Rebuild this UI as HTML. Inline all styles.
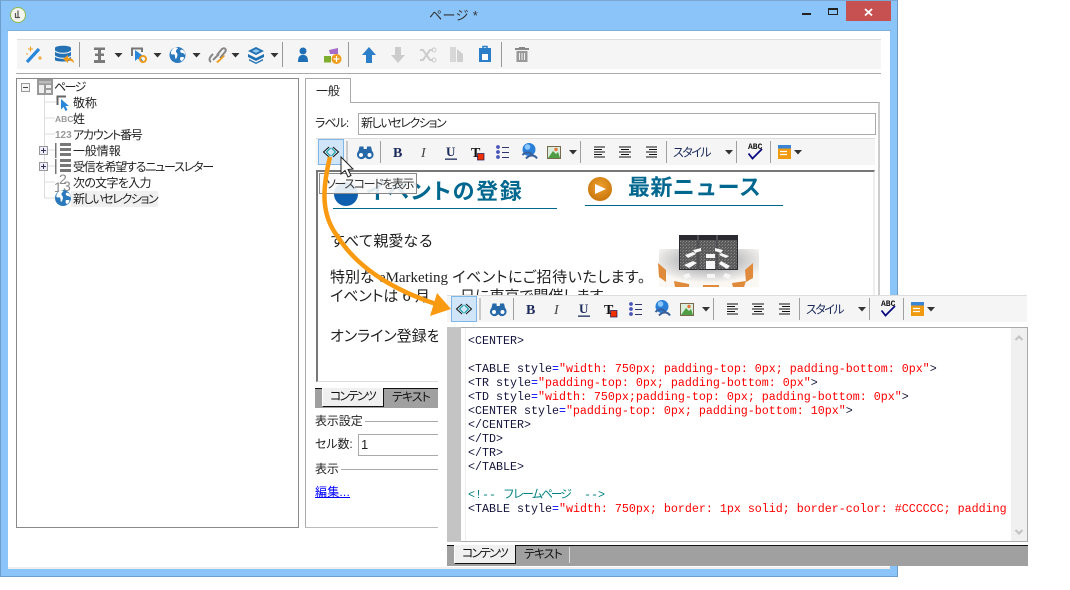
<!DOCTYPE html>
<html lang="ja"><head><meta charset="utf-8"><title>ページ *</title>
<style>
html,body{margin:0;padding:0;background:#fff}
body{width:1070px;height:590px;position:relative;overflow:hidden;font-family:"Liberation Sans","Noto Sans CJK JP",sans-serif;font-size:12px;color:#222}
div,a,svg{position:absolute;box-sizing:border-box}
.t{white-space:nowrap;line-height:16px;height:16px;font-feature-settings:"palt";letter-spacing:-.1px}
.b{font-size:15px;line-height:20px;height:20px;color:#222}
.code{font-family:"Liberation Mono",monospace;font-size:11.67px;line-height:14px;height:14px;white-space:pre;left:468px;color:#14143c}
.code i{font-style:normal;color:#00f}.code b{font-weight:normal;color:#f00}
svg{overflow:visible}
</style></head><body>
<!-- window frame -->
<div style="left:0;top:0;width:898px;height:577px;background:#8bc4f8;border:1px solid #6d9ecb;border-top-color:#7aa7d2"></div>
<div style="left:8px;top:31px;width:882px;height:538px;background:#fff;border-bottom:2px solid #eee"></div>
<div style="left:7px;top:30px;width:884px;height:1px;background:#7fb0dd"></div>
<div class="t" style="left:429px;top:8px;font-size:13px;color:#333;letter-spacing:.4px">ページ *</div>
<div style="left:846px;top:1px;width:45px;height:20px;background:#c75050"></div>
<svg style="left:0;top:0" width="1070" height="590">
<defs>
<g id="globe"><circle r="8" fill="#2b79bd"/><path d="M-3-7.5C-6-5-7-3-6.5-1-5 0-4-1-3-.5-2 1-3 3-1.5 4-.5 2 .5 0-.5-2-2-3-2-5 0-6 1-7-1-8-3-7.5ZM3-5C2-3 4-2 5-2 6-2 7-1 7.5 0 8-3 6-6 3-5ZM3 2C2 4 3 6 4 6 6 5 7 3 6 2Z" fill="#fff"/></g>
<g id="arr"><path d="M-4-2H4L0 2.5Z" fill="#333"/></g>
<g id="tb">
<g fill="#a0a0a0">
<rect x="346.500" y="141" width="1" height="22"/><rect x="380" y="141" width="1" height="22"/><rect x="580" y="141" width="1" height="22"/><rect x="666" y="141" width="1" height="22"/><rect x="736" y="141" width="1" height="22"/><rect x="770" y="141" width="1" height="22"/>
</g>
<rect x="318.500" y="139.500" width="25" height="25" fill="#d0e5f8" stroke="#7fb6e8"/>
<path d="M329 147 323.500 152 329 157M333 147 338.500 152 333 157" fill="none" stroke="#111" stroke-width="1"/>
<path d="M330.500 148 326.500 152 330.500 156M331.500 148 335.500 152 331.500 156" fill="none" stroke="#0a9a9a" stroke-width="1"/>
<!-- binoculars -->
<g fill="#2668a8"><circle cx="361.500" cy="154.500" r="4.600"/><circle cx="369" cy="154.500" r="4.600"/><path d="M358 153 359.500 146.500H363.500L364 153ZM366.500 153 367 146.500H371L372.500 153Z"/><rect x="362" y="149" width="6" height="4"/></g>
<circle cx="361" cy="155" r="2" fill="#fff"/><circle cx="369.500" cy="155" r="2" fill="#fff"/>
<rect x="445" y="158.500" width="12" height="1.300" fill="#1b2a5a"/>
<!-- T color -->
<rect x="477.500" y="153.500" width="6.500" height="6.500" fill="#f03000" stroke="#14145a" stroke-width=".7"/>
<!-- list -->
<g fill="#4a55b8"><circle cx="498" cy="147" r="1.900"/><circle cx="498" cy="152" r="1.900"/><circle cx="498" cy="157" r="1.900"/></g>
<path d="M502 147.500H509M502 152.500H509M502 157.500H509" stroke="#30356e" stroke-width="1"/>
<!-- globe link -->
<circle cx="529" cy="149.500" r="6.500" fill="#2a7fd8"/><circle cx="527.500" cy="147" r="2.800" fill="#8cc8ff"/>
<path d="M522.500 155C526 151 531 152 533 156M526 158.500C530 154 535 155 537 158.500" fill="none" stroke="#3a5f98" stroke-width="2"/>
<!-- image -->
<rect x="547.500" y="146.500" width="13" height="12" fill="#dbeedd" stroke="#7a6a50"/>
<path d="M548 158 553 151 556 154 558 152 560 158Z" fill="#4f9e45"/><circle cx="556" cy="149.500" r="1.700" fill="#e8743a"/>
<use href="#arr" x="573" y="152"/>
<!-- align -->
<path d="M594 147H605M594 149.500H602M594 152H605M594 154.500H602M594 157H605" stroke="#111"/>
<path d="M619 147H631M621 149.500H629M619 152H631M621 154.500H629M619 157H631" stroke="#111"/>
<path d="M646 147H657M649 149.500H657M646 152H657M649 154.500H657M646 157H657" stroke="#111"/>
<use href="#arr" x="729" y="152"/>
<!-- abc check -->
<path d="M748.500 153.500 752.500 158.500 762 149" fill="none" stroke="#0a0a80" stroke-width="1.800"/>
<!-- window -->
<rect x="778" y="145" width="13" height="14" fill="#f09a10"/><rect x="778" y="145" width="13" height="3.500" fill="#3a85d5"/><path d="M780 151.500H787M780 154.500H787" stroke="#fff" stroke-width="1.200"/>
<use href="#arr" x="798" y="152"/>
</g>
</defs>
<!-- window icon -->
<circle cx="18" cy="15" r="7.500" fill="#f4f4ee" stroke="#8fb84a"/><path d="M18 10.500V17M15.500 13V17.500H20" fill="none" stroke="#555" stroke-width="1.200"/>
<!-- window buttons -->
<rect x="802" y="13" width="9" height="2" fill="#222"/>
<rect x="828.500" y="8.500" width="9" height="6" fill="none" stroke="#222"/><rect x="828" y="8" width="10" height="2" fill="#222"/>
<path d="M865 9 872 15.500M872 9 865 15.500" stroke="#fff" stroke-width="1.800"/>
</svg>

<!-- main toolbar -->
<div style="left:17px;top:39px;width:864px;height:30px;background:#f5f5f5;border-top:1px solid #ddd"></div>
<div style="left:16px;top:73px;width:865px;height:1px;background:#aaa"></div>
<svg style="left:0;top:0" width="1070" height="590">
<!-- wand -->
<path d="M27 62 39 49" stroke="#2a86d8" stroke-width="3.200"/>
<path d="M28 49h5M30.500 46.500v5M38 58h4M40 56v4M26 54h2" stroke="#f0a020" stroke-width="1.100"/>
<!-- db -->
<path d="M55 48C55 45 71 45 71 48V60C71 62 55 62 55 60Z" fill="#2472b4"/>
<path d="M55 51C58 54 68 54 71 51M55 56C58 59 68 59 71 56" fill="none" stroke="#fff"/>
<path d="M63 59 68 55V58C72 58 74 60 74 63 72 61 70 60.500 68 60.500V63Z" fill="#ef9b1c"/>
<!-- separators -->
<g fill="#999"><rect x="79" y="42" width="1" height="25"/><rect x="282" y="42" width="1" height="25"/><rect x="348" y="42" width="1" height="25"/><rect x="501" y="42" width="1" height="25"/></g>
<!-- ibeam -->
<path d="M94 47.500H105V50H101V53.500H104V56H101V60H105V63H94V60H98V56H95V53.500H98V50H94Z" fill="#7a7a7a"/>
<use href="#arr" x="118.500" y="55"/>
<!-- cursor gear -->
<path d="M132 56V48.500H142V52" fill="none" stroke="#777" stroke-width="2"/>
<path d="M135 50V61L138 58.500 141 62 143 61 140.500 57.500 144 56.500Z" fill="#2a86d8"/>
<circle cx="143" cy="59" r="3" fill="none" stroke="#ef9b1c" stroke-width="2"/>
<use href="#arr" x="157.500" y="55"/>
<use href="#globe" x="177.500" y="55"/>
<use href="#arr" x="196.500" y="55"/>
<!-- link -->
<path d="M211 62C208 60 210 57 213 54M217 55 222 49C225 47 227 50 225 52L220 58M213 60 219 54" fill="none" stroke="#888" stroke-width="2"/>
<path d="M216 62 224 55 225 56 218 63Z" fill="#ef9b1c"/>
<use href="#arr" x="235.500" y="55"/>
<!-- layers -->
<path d="M256 47 264 51 256 55 248 51Z" fill="#1f70b0"/><path d="M248 54 256 58 264 54V57L256 61 248 57Z" fill="#1f70b0"/><path d="M249 59 256 62.500 263 59V60.500L256 64 249 60.500Z" fill="#1f70b0"/>
<path d="M252 51 256 49 260 51 256 53Z" fill="#8dc6ee"/>
<use href="#arr" x="274.500" y="55"/>
<!-- person -->
<circle cx="303" cy="51" r="3.500" fill="#1e6fb5"/><path d="M298 62C298 56 300 55 303 55 306 55 308 56 308 62Z" fill="#1e6fb5"/>
<!-- shapes -->
<path d="M329 50 338 48V54H330Z" fill="#a66cc8"/><rect x="324" y="56" width="7" height="6.500" fill="#7fae2e"/><circle cx="336.500" cy="59" r="5" fill="#ef9b1c"/><path d="M333.500 59H339.500M336.500 56V62" stroke="#fff" stroke-width="1.200"/>
<!-- arrows -->
<path d="M369 47 376 55H372V63H366V55H362Z" fill="#2a7fc8"/>
<path d="M398 63 405 55H401V47H395V55H391Z" fill="#ccc"/>
<path d="M420 50H423L430 60H433M420 60H423L430 50H433" fill="none" stroke="#ccc" stroke-width="2"/><circle cx="434" cy="50" r="2" fill="none" stroke="#ccc"/><circle cx="434" cy="60" r="2" fill="none" stroke="#ccc"/>
<path d="M450 47H456V62H450Z" fill="#d8d8d8"/><path d="M457 49 463 54V62H457Z" fill="#cfcfcf"/>
<path d="M479 48H491V62H479Z" fill="#2a7fc8"/><rect x="483" y="46.500" width="4" height="4" fill="none" stroke="#2a7fc8" stroke-width="1.500"/><path d="M482 54H488V60H482Z" fill="#fff"/>
<path d="M515 49H529" stroke="#888" stroke-width="2"/><rect x="519" y="47" width="6" height="2" fill="#888"/><path d="M516.500 51H527.500V62H516.500Z" fill="#999"/><path d="M519.500 53V60M522 53V60M524.500 53V60" stroke="#eee"/>
</svg>

<!-- tree -->
<div style="left:16px;top:78px;width:283px;height:450px;background:#fff;border:1px solid #8a8a8a"></div>
<svg style="left:0;top:0" width="1070" height="590">
<path d="M44.500 95V198M44.500 102H56M44.500 118H55M44.500 134H55M48 150H55M48 166H55M44.500 182H55M44.500 198H55" stroke="#dcdcdc" fill="none"/>
<rect x="21.500" y="83.500" width="8" height="8" fill="#f4f4f4" stroke="#999"/><path d="M23 87.500H28" stroke="#444"/>
<rect x="39.500" y="146.500" width="8" height="8" fill="#eef" stroke="#999"/><path d="M41 150.500H46M43.500 148V153" stroke="#335"/>
<rect x="39.500" y="162.500" width="8" height="8" fill="#eef" stroke="#999"/><path d="M41 166.500H46M43.500 164V169" stroke="#335"/>
<!-- page icon -->
<rect x="37" y="79" width="16" height="16" fill="#999"/><rect x="39" y="85" width="5" height="8" fill="#eee"/><rect x="46" y="85" width="5" height="3" fill="#eee"/><rect x="46" y="90" width="5" height="3" fill="#eee"/><rect x="39" y="81" width="12" height="2.500" fill="#bbb"/>
<!-- cursor -->
<path d="M57.500 105V96.500H66" fill="none" stroke="#666" stroke-width="2"/>
<path d="M61 99V109.500L63.500 107 65.500 111 67.500 110 65.500 106H69Z" fill="#2a86d8"/>
<text x="55" y="122" font-family="Liberation Sans" font-size="8.500" font-weight="bold" fill="#999">ABC</text>
<text x="55" y="138" font-family="Liberation Sans" font-size="10" font-weight="bold" fill="#999">123</text>
<g fill="#777"><rect x="55" y="143" width="1.500" height="15"/><rect x="55" y="159" width="1.500" height="15"/>
<rect x="60" y="143" width="11" height="3"/><rect x="60" y="148" width="11" height="3"/><rect x="60" y="153" width="11" height="3"/>
<rect x="60" y="159" width="11" height="3"/><rect x="60" y="164" width="11" height="3"/><rect x="60" y="169" width="11" height="3"/></g>
<g font-family="Liberation Sans" font-size="14" fill="#8a8a8a"><text x="59" y="184">2</text><text x="54" y="192">1</text><text x="63" y="191">3</text></g>
<use href="#globe" x="63" y="198"/>
</svg>
<div style="left:71px;top:191px;width:87px;height:16px;background:#f0f0f0"></div>
<div class="t" style="left:54px;top:79px;letter-spacing:-1.600px">ページ</div>
<div class="t" style="left:73px;top:95px">敬称</div>
<div class="t" style="left:73px;top:111px">姓</div>
<div class="t" style="left:73px;top:127px;letter-spacing:-1.200px">アカウント番号</div>
<div class="t" style="left:73px;top:143px">一般情報</div>
<div class="t" style="left:73px;top:159px;letter-spacing:-1.200px">受信を希望するニュースレター</div>
<div class="t" style="left:73px;top:175px;letter-spacing:-.7px">次の文字を入力</div>
<div class="t" style="left:73px;top:191px;letter-spacing:-1.400px">新しいセレクション</div>

<!-- right panel -->
<div style="left:305px;top:102px;width:575px;height:426px;border:1px solid #aaa;border-right:2px solid #ccc;border-bottom-color:#bbb"></div>
<div style="left:305px;top:78px;width:46px;height:25px;background:#fff;border:1px solid #aaa;border-bottom:0"></div>
<div class="t" style="left:316px;top:83px">一般</div>
<div class="t" style="left:315px;top:115px;letter-spacing:-1px">ラベル:</div>
<div style="left:358px;top:113px;width:518px;height:22px;border:1px solid #aaa"></div>
<div class="t" style="left:361px;top:115px;letter-spacing:-1.400px">新しいセレクション</div>
<div style="left:316px;top:138px;width:559px;height:27px;background:#f5f5f5;border-top:1px solid #ddd"></div>
<!-- editor -->
<div style="left:316px;top:170px;width:559px;height:212px;border:2px solid #777;border-right:1px solid #eee;border-bottom:1px solid #ddd;background:#fff"></div>
<div style="left:873px;top:172px;width:1px;height:130px;background:#eee"></div>
<div class="t" style="left:366px;top:177px;height:30px;line-height:30px;font-size:22px;font-weight:bold;color:#00678f;letter-spacing:1.700px">イベントの登録</div>
<div style="left:333px;top:208px;width:224px;height:1px;background:#00678f"></div>
<div style="left:334px;top:182px;width:24px;height:24px;border-radius:12px;background:#0d5fae"></div>
<div style="left:588px;top:177px;width:24px;height:24px;border-radius:12px;background:radial-gradient(circle at 50% 40%,#f0a030,#bd6a00)"></div>
<svg style="left:0;top:0" width="1070" height="590"><path d="M595 184 606 189 595 194Z" fill="#fff"/></svg>
<div class="t" style="left:628px;top:173px;height:30px;line-height:30px;font-size:22px;font-weight:bold;color:#00678f;letter-spacing:.4px;font-feature-settings:normal">最新ニュース</div>
<div style="left:585px;top:205px;width:198px;height:1px;background:#00678f"></div>
<div class="t b" style="left:330px;top:230px;letter-spacing:0;font-feature-settings:normal;top:232px">すべて親愛なる</div>
<div class="t b" style="left:330px;top:268px;letter-spacing:0">特別な <span style="font-family:'Liberation Serif',serif">eMarketing</span> <span style="letter-spacing:.6px">イベントにご招待いたします。</span></div>
<div class="t b" style="left:330px;top:287px;letter-spacing:0">イベントは 6 月　　日に東京で開催します</div>
<div class="t b" style="left:330px;top:327px;letter-spacing:0">オンライン登録をお願いします</div>
<!-- server image -->
<svg style="left:653px;top:235px" width="110" height="52" viewBox="0 0 110 52">
<defs><radialGradient id="fl" cx=".5" cy=".3" r=".6"><stop offset="0" stop-color="#8a8a8a"/><stop offset=".6" stop-color="#cfcfcf"/><stop offset="1" stop-color="#fbf8f4"/></radialGradient>
<pattern id="nz" width="3" height="3" patternUnits="userSpaceOnUse"><rect width="3" height="3" fill="#5a5a5a"/><rect width="1" height="1" fill="#8a8a8a"/><rect x="2" y="1" width="1" height="1" fill="#777"/></pattern></defs>
<rect x="6" y="14" width="100" height="38" fill="url(#fl)"/>
<rect x="26" y="0" width="59" height="35" fill="#2a2a30"/><rect x="27" y="5" width="17" height="29" fill="url(#nz)"/><rect x="46" y="5" width="17" height="29" fill="url(#nz)"/><rect x="65" y="5" width="19" height="29" fill="url(#nz)"/>
<path d="M45 0V35M64 0V35" stroke="#aaa" stroke-width=".6"/>
<g fill="#f6f6f6"><path d="M32 20 40 17 43 19 35 23Z"/><path d="M53 19H62V23H53Z"/><path d="M68 18 76 21 73 23 66 20Z"/><path d="M31 30 40 26 44 28 36 33Z"/><path d="M53 26H62V34H53Z"/><path d="M68 26 77 31 74 34 66 29Z"/>
<path d="M30 40 36 38 38 42 32 44Z"/><path d="M54 39H62V43H54Z"/><path d="M72 38 78 40 76 44 70 42Z"/><path d="M40 15 48 13V16L42 18Z"/><path d="M62 13 70 15 68 18 62 16Z"/></g>
<g fill="#e08a3c"><path d="M5 28 13 35 13 47 6 42Z"/><path d="M92 35 100 28 100 43 93 47Z"/><path d="M21 46 36 49V52H22Z"/><path d="M50 50H66V52H50Z"/><path d="M79 48 93 46 91 52H80Z"/></g>
</svg>
<!-- sub tabs -->
<div style="left:315px;top:388px;width:123px;height:20px;background:#a0a0a0;border-top:1px solid #111"></div>
<div style="left:322px;top:388px;width:62px;height:19px;background:#f0f0f0;border-right:1px solid #111;border-bottom:1px solid #111;border-left:1px solid #fff"></div>
<div class="t" style="left:330px;top:388px;color:#111;letter-spacing:-2px">コンテンツ</div>
<div class="t" style="left:392px;top:389px;color:#111;letter-spacing:-1px">テキスト</div>
<div class="t" style="left:315px;top:413px">表示設定</div>
<div style="left:365px;top:421px;width:73px;height:1px;background:#aaa"></div>
<div class="t" style="left:315px;top:436px">セル数:</div>
<div style="left:358px;top:434px;width:90px;height:22px;border:1px solid #aaa"></div>
<div class="t" style="left:361px;top:437px;font-size:13px">1</div>
<div class="t" style="left:315px;top:461px">表示</div>
<div style="left:341px;top:469px;width:97px;height:1px;background:#aaa"></div>
<a class="t" href="#" style="left:315px;top:484px;color:#00f;text-decoration:underline;letter-spacing:.2px">編集...</a>

<!-- tooltip + cursor -->
<div style="left:319px;top:173px;width:98px;height:21px;background:rgba(250,250,250,.9);border:1px solid #888"></div>
<div class="t" style="left:326px;top:176px;color:#333;letter-spacing:-1.400px">ソースコードを表示</div>

<!-- overlay panel -->
<div style="left:438px;top:295px;width:590px;height:271px;background:#fff"></div>
<div style="left:447px;top:295px;width:580px;height:27px;background:#f5f5f5;border-top:1px solid #ddd"></div>
<div style="left:447px;top:327px;width:581px;height:215px;background:#fff;border:1px solid #aaa;border-left:0"></div>
<div style="left:447px;top:327px;width:14px;height:215px;background:#c4c4c4"></div>
<div style="left:465px;top:328px;width:1px;height:213px;background:#eee"></div>
<div style="left:1011px;top:328px;width:16px;height:213px;background:#f0f0f0"></div>
<svg style="left:0;top:0" width="1070" height="590">
<path d="M1015.500 340 1019 336.500 1022.500 340" fill="none" stroke="#c4c4c4" stroke-width="2.200"/>
<path d="M1015.500 530 1019 533.500 1022.500 530" fill="none" stroke="#c4c4c4" stroke-width="2.200"/>
</svg>
<div class="code" style="top:334px">&lt;CENTER&gt;</div>
<div class="code" style="top:362px">&lt;TABLE style<i>=</i><b>"width: 750px; padding-top: 0px; padding-bottom: 0px"</b>&gt;</div>
<div class="code" style="top:376px">&lt;TR style<i>=</i><b>"padding-top: 0px; padding-bottom: 0px"</b>&gt;</div>
<div class="code" style="top:390px">&lt;TD style<i>=</i><b>"width: 750px;padding-top: 0px; padding-bottom: 0px"</b>&gt;</div>
<div class="code" style="top:404px">&lt;CENTER style<i>=</i><b>"padding-top: 0px; padding-bottom: 10px"</b>&gt;</div>
<div class="code" style="top:418px">&lt;/CENTER&gt;</div>
<div class="code" style="top:432px">&lt;/TD&gt;</div>
<div class="code" style="top:446px">&lt;/TR&gt;</div>
<div class="code" style="top:460px">&lt;/TABLE&gt;</div>
<div class="code" style="top:488px;color:#008080;font-family:'Liberation Mono','Noto Sans CJK JP',monospace">&lt;!-- <span style="letter-spacing:-2px">フレームページ</span>  --&gt;</div>
<div class="code" style="top:502px;width:540px;overflow:hidden">&lt;TABLE style<i>=</i><b>"width: 750px; border: 1px solid; border-color: #CCCCCC; padding</b></div>
<!-- overlay tab strip -->
<div style="left:447px;top:545px;width:581px;height:21px;background:#a0a0a0;border-top:1px solid #111"></div>
<div style="left:454px;top:545px;width:62px;height:19px;background:#f0f0f0;border-right:1px solid #111;border-bottom:1px solid #111;border-left:1px solid #fff"></div>
<div class="t" style="left:462px;top:545px;color:#111;letter-spacing:-2px">コンテンツ</div>
<div class="t" style="left:524px;top:546px;color:#111;letter-spacing:-1px">テキスト</div>
<div style="left:569px;top:547px;width:1px;height:16px;background:#ddd"></div>

<!-- toolbars + text, arrow -->
<svg style="left:0;top:0" width="1070" height="590" font-family="Liberation Serif,serif" fill="#1b2a5a">
<use href="#tb"/>
<use href="#tb" transform="translate(133,157)"/>
<g font-size="14" font-weight="bold"><text x="393" y="157">B</text><text x="526" y="314">B</text></g>
<g font-size="14" font-style="italic" fill="#444"><text x="421" y="157">I</text><text x="554" y="314">I</text></g>
<g font-size="13" font-weight="bold"><text x="446" y="156">U</text><text x="579" y="313">U</text></g>
<rect x="578" y="315.500" width="12" height="1.300" fill="#1b2a5a" opacity="0"/>
<g font-size="14" font-weight="bold" fill="#111"><text x="471" y="157">T</text><text x="604" y="314">T</text></g>
<g font-size="12" font-family="Liberation Sans,Noto Sans CJK JP,sans-serif" fill="#1b2a5a" letter-spacing="-1.500" style="font-feature-settings:'palt'"><text x="673" y="156.500">スタイル</text><text x="806" y="313.500">スタイル</text></g>
<g font-size="8" font-family="Liberation Mono,monospace" font-weight="bold" fill="#111"><text x="748" y="149">ABC</text><text x="881" y="306">ABC</text></g>
<!-- orange arrow -->
<path d="M330 157C322 190 321 215 338 237 350 256 376 284 436 304" fill="none" stroke="#f99a10" stroke-width="4.500"/>
<path d="M437 293 451 309 430 316Z" fill="#f99a10"/>
<!-- mouse cursor -->
<path d="M341 157V174L345 170.500 348 177 351 175.500 348 169.500 353 169Z" fill="#fff" stroke="#222" stroke-width="1"/>
</svg>
</body></html>
